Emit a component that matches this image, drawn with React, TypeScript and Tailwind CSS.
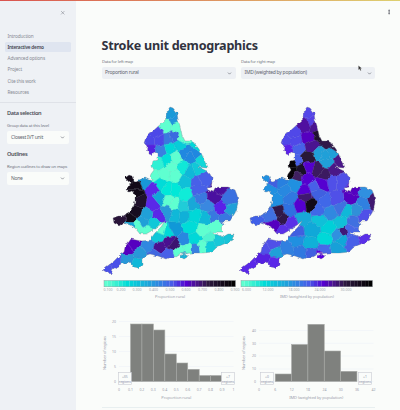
import React from "react";
import { ChevronDown, X, EllipsisVertical } from "lucide-react";

type Seed = [number, number, string];
type Pt = [number, number];

const COAST =
  "M170,107 L167.3,111 167,118 163,122 159.7,125 153,131 147,134 144,143 147,146 146.5,151 149,151 149,154 152,155 154,152 157,153 157,160 153,161 152,166 154,170 151,174 150,177 153,180 149,180 145,178 141,179 137,181 133,180 132,176 129,175 125,178 128,181 131,183 128,187 126,189 128,192 132,191 135,195 135,202 133,208 128,213 123,216 118,216 113,218 114,223 119,226 123,223 130,225 135,228 140,234 146,234 153,230 160,225 165,221 161,227 155,233 152,237 152,240 141,241 131,239 128,243 125,247 124,252 120,255 113,262 106,267 102,271 105,273 108,271 111,274 113,269 121,264 130,262 134,267 139,268 142,265 142,260 144,258 147,255 150,254 158,256 166,259 170,257 175,257 180,254 192,253 203,253 212,252 217,247 224,244 232,240 234,234 228,234 223,237 218,235 213,233 218,232 223,232 220,229 224,225 222,221 230,221 233,216 235,213 237,208 238,202 237,195 235,190 228,187 219,187 215,188 213,192 208,190 207,188 211,187 212,182 212,178 210,174 207,171 198,167 207,168 205,162 202,155 199,149 195,144 190,141 185,141 182,135 180,126 178,120 177,113 173,108 Z M179,256 L184,254 189,256 184,259 Z";

const RURAL: Seed[] = [
  [171, 113, "#1a9ad8"], [175, 120, "#2094dc"], [166, 126, "#5fffd0"], [177, 127, "#5fffd0"],
  [156, 134, "#4d48e8"], [150, 140, "#4d48e8"], [159, 140, "#4d48e8"], [150, 150, "#5520e0"],
  [169, 140, "#3a78e0"], [161, 151, "#3a80e0"], [174, 137, "#3a6ce0"], [183, 138, "#5fffd0"],
  [170, 148, "#00d8d8"], [179, 146, "#08ccd8"], [158, 163, "#30f0d4"], [167, 160, "#00e0d8"],
  [165, 175, "#5fffd0"], [172, 167, "#5fffd0"], [154, 176, "#5fffd0"], [160, 184, "#00dcd8"],
  [145, 182, "#1898d8"], [153, 189, "#5a28e8"], [136, 186, "#120a18"], [129, 178, "#120a18"],
  [190, 156, "#2088e0"], [185, 153, "#2088e0"], [195, 153, "#2088e0"], [199, 147, "#00d8d8"],
  [202, 161, "#10d8d8"], [176, 158, "#5fffd0"], [183, 168, "#10e8d8"], [175, 176, "#5fffd0"],
  [190, 172, "#10b8d8"], [203, 179, "#4860e8"], [197, 182, "#4860e8"], [185, 182, "#10c0d8"],
  [198, 169, "#10c8d8"], [140, 201, "#20122c"], [136, 193, "#120a18"], [136, 212, "#170d20"],
  [131, 219, "#120a18"], [120, 219, "#281438"], [153, 203, "#5a28e8"], [159, 216, "#5a28e8"],
  [159, 198, "#10a8d8"], [168, 190, "#00e8d8"], [169, 201, "#5fffd0"], [167, 212, "#2898d8"],
  [146, 215, "#20a0d8"], [137, 225, "#5fffd0"], [131, 226, "#10a8d8"], [148, 231, "#5fffd0"],
  [154, 223, "#10c8d8"], [143, 221, "#20a0d8"], [161, 230, "#5fffd0"], [158, 237, "#10c8d8"],
  [169, 232, "#00d8d8"], [134, 244, "#5500c0"], [127, 250, "#5500c0"], [148, 246, "#3088e0"],
  [160, 248, "#4a1090"], [155, 255, "#4068e0"], [170, 241, "#4a1090"], [127, 259, "#2898d8"],
  [138, 264, "#10b8d8"], [140, 253, "#2898d8"], [115, 262, "#4a50e8"], [106, 270, "#4a50e8"],
  [167, 255, "#4860e8"], [175, 190, "#00e8d8"], [174, 204, "#5fffd0"], [185, 195, "#10ecd8"],
  [193, 204, "#18a8d8"], [199, 190, "#4860e8"], [201, 198, "#3a78e0"], [208, 206, "#3a88e0"],
  [214, 197, "#4a10a0"], [229, 198, "#3a70e0"], [219, 189, "#4a10a0"], [220, 209, "#5a20e8"],
  [231, 210, "#20a0d8"], [225, 218, "#3878e0"], [213, 215, "#3878e0"], [205, 217, "#10b8d8"],
  [195, 216, "#00d8d8"], [183, 216, "#10b0d8"], [175, 229, "#1098d8"], [190, 228, "#00dcd8"],
  [203, 231, "#5fffd0"], [216, 228, "#5fffd0"], [209, 238, "#50f4d0"], [174, 244, "#3c1270"],
  [184, 240, "#2888e0"], [194, 239, "#00d8d8"], [195, 249, "#3880e0"], [203, 247, "#5fffd0"],
  [210, 247, "#10ccd8"], [219, 241, "#18c8d8"], [229, 238, "#18c4d8"], [180, 251, "#5fffd0"],
  [188, 249, "#5fffd0"], [184, 257, "#18b4d8"], [176, 215, "#10b8d8"], [183, 206, "#20ccd8"],
];

const DEPRIVATION: Seed[] = [
  [172, 112, "#5548e8"], [175, 121, "#5540e4"], [168, 125, "#5010a0"], [179, 127, "#4a1490"],
  [156, 134, "#5048e8"], [149, 140, "#5048e8"], [158, 141, "#5048e8"], [150, 150, "#5a20e8"],
  [172, 138, "#5500c0"], [162, 149, "#4860e8"], [175, 146, "#4a1490"], [182, 134, "#201030"],
  [191, 143, "#301848"], [188, 156, "#20a0d8"], [195, 153, "#20a0d8"], [182, 153, "#20a0d8"],
  [190, 162, "#20a0d8"], [203, 161, "#4a1888"], [199, 147, "#301848"], [170, 157, "#281838"],
  [160, 160, "#4860e8"], [165, 170, "#1a1028"], [155, 172, "#080408"], [154, 163, "#080408"],
  [161, 176, "#402060"], [172, 168, "#5500d0"], [181, 170, "#3c1a60"], [198, 170, "#4a1888"],
  [187, 175, "#3c1a60"], [170, 179, "#5500d0"], [204, 181, "#5050e8"], [195, 181, "#5050e8"],
  [185, 183, "#5500d0"], [177, 187, "#4860e8"], [143, 182, "#2880e0"], [158, 185, "#2090e0"],
  [148, 191, "#2888e0"], [133, 189, "#2090e0"], [128, 178, "#2090e0"], [137, 182, "#4060e0"],
  [168, 191, "#5500d0"], [180, 194, "#4060e0"], [216, 190, "#5500c0"], [229, 193, "#3090e0"],
  [236, 200, "#401870"], [214, 198, "#5500c0"], [226, 203, "#3080e0"], [219, 210, "#3090d8"],
  [210, 211, "#10b8d8"], [227, 217, "#5050e8"], [217, 222, "#4070e0"], [206.5, 231, "#401878"],
  [213, 230, "#4868e8"], [203, 223, "#10c0d8"], [201, 235, "#3090e0"], [205, 240, "#10a8d8"],
  [189, 239, "#00d8d8"], [192, 228, "#00d0d8"], [183, 220, "#10c0d8"], [175, 230, "#10a8d8"],
  [166, 219, "#18a8d8"], [173, 243, "#10b0d8"], [160, 241, "#2090e0"], [159, 231, "#4060e0"],
  [163, 251, "#3078e0"], [175, 253, "#4060e0"], [188, 251, "#4868e8"], [200, 248, "#18a0d8"],
  [215, 242, "#4860e8"], [229, 239, "#5a30e8"], [184, 257, "#5500e0"], [139, 200, "#2090e0"],
  [153, 198, "#3078e0"], [152, 210, "#3070e0"], [164, 205, "#5500d0"], [169, 197, "#401870"],
  [173.5, 204, "#120a18"], [188, 202, "#4068e8"], [200, 200, "#5050e8"], [146, 219, "#301848"],
  [142, 212, "#301848"], [134, 216, "#4070e0"], [118, 221, "#4060e8"], [137, 226, "#5500c0"],
  [146, 231, "#5a30e8"], [154, 223, "#5a30e8"], [136, 244, "#5050e8"], [127, 249, "#5050e8"],
  [139, 253, "#20a0d8"], [127, 259, "#5520e0"], [112, 267, "#5a28e8"], [137, 263, "#5a28e8"],
  [150, 249, "#3080e0"], [182, 210, "#4068e8"], [193, 212, "#3088e0"], [203, 207, "#4070e0"],
];

// Clips the map's bounding box by the bisector between a seed and every other seed.
function cell(seeds: Seed[], i: number): Pt[] {
  const [x, y] = seeds[i];
  let poly: Pt[] = [[95, 98], [245, 98], [245, 280], [95, 280]];
  seeds.forEach(([sx, sy], j) => {
    if (j === i) return;
    const side = (p: Pt) => (p[0] - (x + sx) / 2) * (sx - x) + (p[1] - (y + sy) / 2) * (sy - y);
    const next: Pt[] = [];
    poly.forEach((a, k) => {
      const b = poly[(k + 1) % poly.length];
      const da = side(a);
      const db = side(b);
      if (da <= 0) next.push(a);
      if (da * db < 0) {
        const t = da / (da - db);
        next.push([a[0] + t * (b[0] - a[0]), a[1] + t * (b[1] - a[1])]);
      }
    });
    poly = next;
  });
  return poly;
}

const STOPS: [number, number[]][] = [
  [0, [95, 255, 208]], [0.06, [70, 245, 208]], [0.17, [0, 220, 216]], [0.35, [32, 160, 220]],
  [0.52, [72, 90, 232]], [0.63, [85, 0, 208]], [0.71, [74, 20, 140]], [0.8, [44, 24, 64]], [1, [0, 0, 0]],
];

function scaleColour(t: number) {
  const k = Math.max(1, STOPS.findIndex(([s]) => s >= t));
  const [a, ca] = STOPS[k - 1];
  const [b, cb] = STOPS[k];
  const f = (t - a) / (b - a);
  return `rgb(${ca.map((c, i) => Math.round(c + f * (cb[i] - c))).join(",")})`;
}

function MapFigure({ id, seeds, title, titleWidth, ticks }: { id: string; seeds: Seed[]; title: string; titleWidth: number; ticks: [number, string][] }) {
  return (
    <svg viewBox="101 100 137 204" className="h-[204px] w-[137px] overflow-visible font-['Noto_Sans',sans-serif]">
      <defs>
        <clipPath id={id}><path d={COAST} /></clipPath>
        <filter id={`${id}-rough`} x="-5%" y="-5%" width="110%" height="110%" colorInterpolationFilters="sRGB">
          <feTurbulence type="fractalNoise" baseFrequency="0.2" numOctaves="2" seed="4" />
          <feDisplacementMap in="SourceGraphic" scale="3.5" xChannelSelector="R" yChannelSelector="G" />
        </filter>
      </defs>
      <g filter={`url(#${id}-rough)`}>
        <g clipPath={`url(#${id})`}>
          {seeds.map((s, i) => (
            <polygon key={i} points={cell(seeds, i).map((p) => p.join(",")).join(" ")} fill={s[2]} stroke={s[2]} strokeWidth="0.5" />
          ))}
          {seeds.map((s, i) => (
            <polygon key={i} points={cell(seeds, i).map((p) => p.join(",")).join(" ")} fill="none" stroke="#8899aa" strokeOpacity="0.2" strokeWidth="0.3" />
          ))}
        </g>
        <path d={COAST} fill="none" stroke="#777b88" strokeOpacity="0.65" strokeWidth="0.5" />
      </g>
      {Array.from({ length: 36 }, (_, i) => (
        <rect key={i} x={104 + i * 3.65} y="280.5" width="3.7" height="6.3" fill={scaleColour(i / 35)} />
      ))}
      <rect x="104" y="280.5" width="131.5" height="6.3" fill="none" stroke="#8a8f98" strokeWidth="0.4" />
      {ticks.map(([x, t]) => (
        <text key={t} x={x} y="291.4" textAnchor="middle" fontSize="3.5" fill="#a4a6b0">{t}</text>
      ))}
      <text x="170" y="298.4" textAnchor="middle" fontSize="4.1" textLength={titleWidth} fill="#9c9eac">{title}</text>
    </svg>
  );
}

type HistProps = {
  x0: number; ticks: string[]; step: number; start: number; tops: number[];
  yTicks: [number, number][]; yTickX: number; yTitleX: number; title: string; titleWidth: number; boxes: [number, string][];
};

function Histogram({ x0, ticks, step, start, tops, yTicks, yTickX, yTitleX, title, titleWidth, boxes }: HistProps) {
  const end = x0 + step * (ticks.length - 1);
  return (
    <svg viewBox={`${x0 - 18} 304 137 101`} className="h-[101px] w-[137px] shrink-0 overflow-visible font-['Noto_Sans',sans-serif]">
      {yTicks.map(([v, y]) => (
        <g key={v}>
          <line x1={x0} x2={end} y1={y} y2={y} stroke="#eff1f8" strokeWidth="0.6" />
          <text x={yTickX} y={y + 1.3} textAnchor="end" fontSize="3.5" fill="#9c9eac">{v}</text>
        </g>
      ))}
      {tops.map((y, i) => (
        <rect key={i} x={start + i * step} y={y} width={step} height={381.5 - y} fill="#7f817e" stroke="#a9aba8" strokeWidth="0.6" />
      ))}
      {ticks.map((t, i) => (
        <text key={t} x={x0 + i * step} y="391.4" textAnchor="middle" fontSize="3.5" fill="#9c9eac">{t}</text>
      ))}
      {boxes.map(([x, t]) => (
        <g key={x} textAnchor="middle" fontSize="3.4" fill="#9096aa">
          <rect x={x} y="372.5" width="13" height="12" fill="#fafcfa" stroke="#c8cad2" strokeWidth="0.6" />
          <line x1={x} x2={x + 13} y1="381.5" y2="381.5" stroke="#dfe2ed" strokeWidth="0.6" />
          <text x={x + 6.5} y="377.7">{t}</text>
          <text x={x + 6.5} y="382.5" textLength="12">regions</text>
        </g>
      ))}
      <text x={(x0 + end) / 2} y="399.4" textAnchor="middle" fontSize="4.1" textLength={titleWidth} fill="#9c9eac">{title}</text>
      <text transform={`translate(${yTitleX} 353) rotate(-90)`} textAnchor="middle" fontSize="4.1" textLength="34" fill="#9c9eac">Number of regions</text>
    </svg>
  );
}

function Select({ label, value, className }: { label: string; value: string; className: string }) {
  return (
    <div>
      <div className="h-[9px] text-[4.2px] leading-[8px] tracking-[-0.15px] whitespace-nowrap text-[#6d707b]">{label}</div>
      <div className={`flex items-center justify-between rounded-[2px] text-[5px] tracking-[-0.27px] text-[#62656f] ${className}`}>
        <span>{value}</span>
        <ChevronDown size={5} strokeWidth={3} />
      </div>
    </div>
  );
}

const PAGES = ["Introduction", "Interactive demo", "Advanced options", "Project", "Cite this work", "Resources"];

export default function App() {
  return (
    <div className="relative flex h-[410px] w-[400px] flex-col overflow-hidden bg-[#fafcfa] font-['Noto_Sans',sans-serif] text-[#31333f]">
      <div className="h-px w-full shrink-0 bg-linear-to-r from-[#d9534f] via-[#dd9060] to-[#ddd070]" />
      <div className="flex min-h-0 flex-1">
        <aside className="w-[76px] shrink-0 bg-[#eef1f5]">
          <div className="flex h-[29.5px] justify-end pt-[8.5px] pr-[10.5px]">
            <X size={5.5} strokeWidth={2.2} className="text-[#767984]" />
          </div>
          <nav className="flex flex-col gap-[1.3px] pr-[5px] pl-[5px]">
            {PAGES.map((p) => (
              <div
                key={p}
                className={
                  p === "Interactive demo"
                    ? "h-[10px] rounded-[1.5px] bg-[#dfe5f0] pl-[2.5px] text-[4.75px] leading-[10px] font-semibold tracking-[-0.22px] text-[#42454f]"
                    : "h-[10px] pl-[2.5px] text-[4.75px] leading-[10px] tracking-[-0.15px] text-[#868993]"
                }
              >
                {p}
              </div>
            ))}
          </nav>
          <div className="mt-[5px] h-px bg-[#dfe2e8]" />
          <div className="px-[7px]">
            <h2 className="mt-[6px] mb-[4px] text-[5.6px] leading-[9px] font-semibold tracking-[-0.33px] text-[#4b4e58]">Data selection</h2>
            <Select label="Group data at this level" value="Closest IVT unit" className="h-[13px] bg-[#fafcfa] pr-[4px] pl-[4px]" />
            <h2 className="mt-[6.5px] mb-[3.5px] text-[5.6px] leading-[9px] font-semibold tracking-[-0.33px] text-[#4b4e58]">Outlines</h2>
            <Select label="Region outlines to draw on maps" value="None" className="h-[13px] bg-[#fafcfa] pr-[4px] pl-[4px]" />
          </div>
        </aside>
        <main className="flex min-w-0 flex-1 flex-col pl-[26px]">
          <div className="flex h-[35.5px] justify-end pt-[7.5px] pr-[8.5px]">
            <EllipsisVertical size={6} strokeWidth={3} className="text-[#555861]" />
          </div>
          <h1 className="-ml-[0.5px] h-[21.5px] text-[12.6px] leading-[18.5px] font-bold tracking-[-0.25px] whitespace-nowrap">Stroke unit demographics</h1>
          <div className="flex gap-[5px]">
            <Select label="Data for left map" value="Proportion rural" className="h-[12px] w-[134px] bg-[#edf0f4] pr-[4px] pl-[3px]" />
            <Select label="Data for right map" value="IMD (weighted by population)" className="h-[12px] w-[134px] bg-[#edf0f4] pr-[3.5px] pl-[3.5px]" />
          </div>
          <div className="mt-[21px] -ml-px flex">
            <MapFigure
              id="rural"
              seeds={RURAL}
              title="Proportion rural"
              titleWidth={30}
              ticks={[[108, "0.100"], [121, "0.200"], [137, "0.300"], [153.5, "0.400"], [170, "0.500"], [186, "0.600"], [202.5, "0.700"], [219, "0.800"], [235, "0.900"]]}
            />
            <MapFigure
              id="imd"
              seeds={DEPRIVATION}
              title="IMD (weighted by population)"
              titleWidth={54}
              ticks={[[109.5, "6.000"], [131, "12.000"], [157, "18.000"], [183, "24.000"], [209, "30.000"]]}
            />
          </div>
          <div className="-ml-px flex gap-[3px]">
            <Histogram
              x0={119} step={11.45} start={130.5}
              ticks={["0", "0.1", "0.2", "0.3", "0.4", "0.5", "0.6", "0.7", "0.8", "0.9", "1"]}
              tops={[324, 324, 330, 354, 363, 369.3, 375.5, 375.5]}
              yTicks={[[0, 381.5], [5, 366.5], [10, 351.5], [15, 336.5], [20, 321.5]]}
              yTickX={116} yTitleX={106} title="Proportion rural" titleWidth={30} boxes={[[118.3, "+35"], [221.5, "+7"]]}
            />
            <Histogram
              x0={259} step={16.35} start={275.2}
              ticks={["0", "6", "12", "18", "24", "30", "36", "42"]}
              tops={[374, 344.5, 324.3, 351, 371.3]}
              yTicks={[[0, 381.5], [10, 369], [20, 356], [30, 343.3], [40, 330.5]]}
              yTickX={256} yTitleX={244.5} title="IMD (weighted by population)" titleWidth={54} boxes={[[260.5, "+0"], [358.5, "+1"]]}
            />
          </div>
          <div className="mt-[2px] h-px w-[273px] bg-[#e8eff0]" />
        </main>
      </div>
      <svg viewBox="0 0 6 8" className="absolute top-[65px] left-[357.5px] h-[6px] w-[4.5px]">
        <path d="M0.5 0.5v6l1.5-1.2 1 2.2 1.3-.6-1-2.1h2z" fill="#333" stroke="#fff" strokeWidth="0.3" />
      </svg>
    </div>
  );
}
